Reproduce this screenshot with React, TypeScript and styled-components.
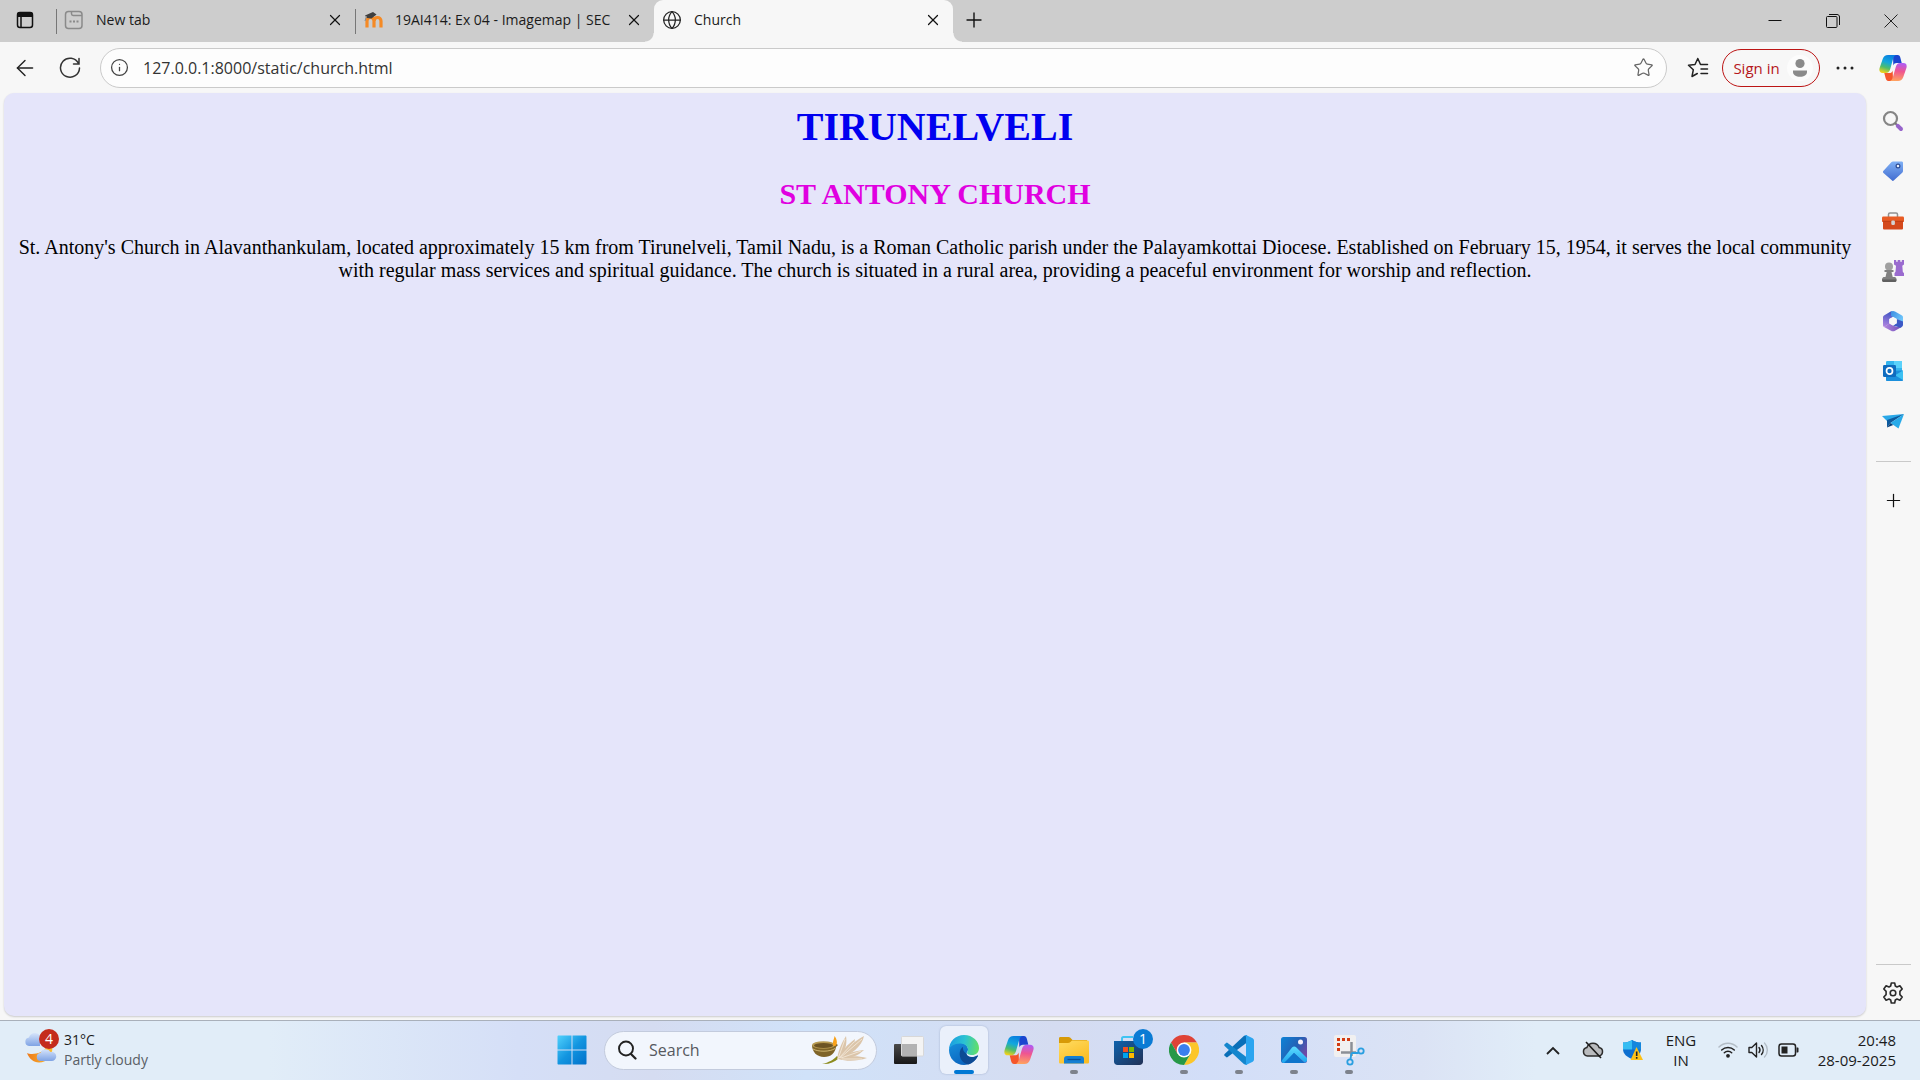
import React from "react";
import styled, { createGlobalStyle, css } from "styled-components";
import { ArrowLeft, Globe, Info, Plus, Star, X } from "lucide-react";

const UI_FONT = '"Open Sans", "Noto Sans", sans-serif';

const GlobalStyle = createGlobalStyle`
  * { box-sizing: border-box; }
  body { margin: 0; background: #f7f7f7; font-family: ${UI_FONT}; color: #1b1b1b; }
  button, input { font: inherit; color: inherit; }
`;

const Screen = styled.div`
  min-height: 100vh;
  display: flex;
  flex-direction: column;
`;

const plainButton = css`
  display: flex;
  align-items: center;
  justify-content: center;
  flex: none;
  padding: 0;
  border: 0;
  background: none;
`;

/* ---------- Tab strip ---------- */

const TabStrip = styled.header`
  height: 42px;
  display: flex;
  align-items: center;
  background: #cdcdcd;
`;

const TabActions = styled.button`
  ${plainButton}
  width: 56px;
  height: 42px;
  padding: 0 6px 2px 0;
`;

const TabShell = styled.div<{ $active?: boolean }>`
  position: relative;
  flex: 0 1 299px;
  min-width: 0;
  height: 42px;
  display: flex;
  align-items: center;
  gap: 12px;
  padding: 0 14px 3px 8px;
  font-size: 14px;
  background: ${(p) => (p.$active ? "#f7f7f7" : "transparent")};
  border-radius: 9px 9px 0 0;

  ${(p) =>
    p.$active
      ? css`
          &::before,
          &::after {
            content: "";
            position: absolute;
            bottom: 0;
            width: 9px;
            height: 9px;
          }
          &::before {
            right: 100%;
            background: radial-gradient(circle at 0 0, transparent 8px, #f7f7f7 9px);
          }
          &::after {
            left: 100%;
            background: radial-gradient(circle at 100% 0, transparent 8px, #f7f7f7 9px);
          }
        `
      : css`
          &::before {
            content: "";
            position: absolute;
            left: 0;
            top: 9px;
            width: 1px;
            height: 25px;
            background: #777;
          }
        `}
`;

const TabTitle = styled.span`
  flex: 1;
  min-width: 0;
  overflow: hidden;
  white-space: nowrap;
`;

const CloseTab = styled.button`
  ${plainButton}
  width: 12px;
  height: 20px;
`;

const NewTab = styled.button`
  ${plainButton}
  width: 42px;
  height: 42px;
  padding-bottom: 3px;
`;

const WindowControls = styled.div`
  margin-left: auto;
  display: flex;
`;

const WindowButton = styled.button`
  ${plainButton}
  width: 58px;
  height: 42px;
`;

/* ---------- Browser body ---------- */

const Browser = styled.div`
  flex: 1;
  display: grid;
  grid-template-columns: minmax(0, 1fr) 54px;
`;

const BrowserMain = styled.div`
  display: flex;
  flex-direction: column;
  padding: 0 0 4px 4px;
`;

const Toolbar = styled.div`
  height: 51px;
  display: flex;
  align-items: center;
  padding-right: 3px;
`;

const ToolButton = styled.button<{ $width: number }>`
  ${plainButton}
  width: ${(p) => p.$width}px;
  height: 40px;
`;

const AddressBar = styled.label`
  flex: 1;
  height: 40px;
  margin: 0 10px 0 6px;
  padding: 0 12px 0 9px;
  display: flex;
  align-items: center;
  gap: 14px;
  border: 1px solid #cacaca;
  border-radius: 20px;
  background: #fdfdfd;
`;

const AddressInput = styled.input`
  flex: 1;
  min-width: 0;
  padding: 0;
  border: 0;
  outline: 0;
  background: none;
  font-size: 16px;
  color: #333;
`;

const SignIn = styled.button`
  ${plainButton}
  width: 98px;
  height: 38px;
  gap: 7px;
  margin: 0 7px 0 3px;
  padding-left: 4px;
  border: 1px solid #bc1515;
  border-radius: 19px;
  color: #b5161b;
  font-size: 15px;
`;

const Avatar = styled.span`
  display: flex;
  border-radius: 50%;
  background: #fcfcfc;
`;

const Page = styled.main`
  flex: 1;
  padding: 11px 10px 10px;
  border-radius: 10px;
  background: #e5e5fa;
  box-shadow: 0 1px 2px rgba(0, 0, 0, 0.18);
  text-align: center;
  font-family: "Liberation Serif", "Times New Roman", serif;
  font-size: 20px;
  line-height: 23px;
  color: #000;
`;

const City = styled.h1`
  margin: 0 0 26px;
  font-size: 40px;
  line-height: 46px;
  color: #0000f0;
`;

const ChurchName = styled.h2`
  margin: 0 0 24px;
  font-size: 30px;
  line-height: 36px;
  color: #e000e0;
`;

const Description = styled.p`
  margin: 0;
`;

const Sidebar = styled.aside`
  display: flex;
  flex-direction: column;
  align-items: center;
`;

const SideButton = styled.button`
  ${plainButton}
  width: 54px;
  height: 50px;
`;

const CopilotButton = styled(SideButton)`
  margin: 1px 0 3px;
`;

const SideRule = styled.hr`
  width: 35px;
  height: 1px;
  flex: none;
  margin: 15px 0 13px;
  border: 0;
  background: #c9c9c9;
`;

const SideFoot = styled.div`
  margin-top: auto;
  padding-bottom: 2px;
  display: flex;
  flex-direction: column;
  align-items: center;

  hr {
    margin-bottom: 3px;
  }
`;

/* ---------- Taskbar ---------- */

const Taskbar = styled.footer`
  height: 60px;
  display: grid;
  grid-template-columns: 1fr auto 1fr;
  align-items: center;
  padding-bottom: 1px;
  border-top: 1px solid #a9b0ba;
  background: linear-gradient(
    90deg,
    #e1edf8 0%,
    #e1edf8 14%,
    #d5dff7 27%,
    #d5dcf1 34%,
    #d0e2f9 42%,
    #d5dcf1 55%,
    #d2def8 63%,
    #dbe3f5 74%,
    #e1edf8 80%,
    #e1edf8 100%
  );
`;

const Weather = styled.button`
  ${plainButton}
  justify-self: start;
  gap: 4px;
  padding-left: 24px;
  text-align: left;
  font-size: 14px;
  line-height: 20px;
`;

const WeatherText = styled.span`
  display: flex;
  flex-direction: column;
  color: #5a6066;

  strong {
    font-weight: 400;
    color: #1b1b1b;
  }
`;

const Apps = styled.nav`
  display: flex;
  align-items: center;
`;

const AppButton = styled.button<{ $state?: "open" | "active" }>`
  ${plainButton}
  position: relative;
  width: 48px;
  height: 48px;
  margin: 0 3px 0 4px;
  border-radius: 6px;
  background: ${(p) => (p.$state === "active" ? "#eaf0fb" : "none")};
  box-shadow: ${(p) => (p.$state === "active" ? "0 0 2px rgba(80, 100, 140, 0.4)" : "none")};

  &::after {
    content: "";
    display: ${(p) => (p.$state ? "block" : "none")};
    position: absolute;
    bottom: 0;
    width: ${(p) => (p.$state === "active" ? 20 : 8)}px;
    height: 4px;
    border-radius: 2px;
    background: ${(p) => (p.$state === "active" ? "#0078d4" : "#7d828c")};
  }
`;

const SearchBox = styled.label`
  width: 273px;
  height: 39px;
  margin: 0 4px 0 5px;
  padding: 0 8px 0 12px;
  display: flex;
  align-items: center;
  gap: 12px;
  border: 1px solid #c3cbdd;
  border-radius: 20px;
  background: #f2f6fd;
`;

const SearchInput = styled.input`
  flex: 1;
  min-width: 0;
  padding: 0;
  border: 0;
  outline: 0;
  background: none;
  font-size: 16px;

  &::placeholder {
    color: #56595f;
    opacity: 1;
  }
`;

const Tray = styled.div`
  justify-self: end;
  display: flex;
  align-items: center;
  padding-right: 24px;
`;

const TrayButton = styled.button<{ $width: number }>`
  ${plainButton}
  width: ${(p) => p.$width}px;
  height: 48px;
  font-size: 15px;
  line-height: 20px;
`;

const Clock = styled(TrayButton)`
  justify-content: flex-end;
  text-align: right;
`;

/* ---------- Drawings ---------- */

const CopilotIcon = ({ id, size }: { id: string; size: number }) => (
  <svg width={size} height={size} viewBox="0 0 28 27" aria-hidden="true">
    <defs>
      <linearGradient id={id + "a"} x1="0.6" y1="0" x2="0.3" y2="1">
        <stop offset="0" stopColor="#0a7fe0" />
        <stop offset="0.4" stopColor="#12a7dd" />
        <stop offset="0.7" stopColor="#4dbd6c" />
        <stop offset="1" stopColor="#f2d11b" />
      </linearGradient>
      <linearGradient id={id + "b"} x1="0.5" y1="0" x2="0.4" y2="1">
        <stop offset="0" stopColor="#b05cf5" />
        <stop offset="0.45" stopColor="#ef5590" />
        <stop offset="1" stopColor="#ffa35f" />
      </linearGradient>
    </defs>
    <path d="M14 .5h4.600c1.800 0 2.400 1.200 2.900 3.200L22.700 8.500h-5c-1.700 0-2.900.8-3.400 2.600z" fill="#1a45cf" />
    <path d="M14 26.500H9.400c-1.800 0-2.400-1.200-2.900-3.200L5.300 18.500h5c1.700 0 2.900-.8 3.400-2.600z" fill="#f5562b" />
    <path d="M9 .5h8.200c-1.800.4-2.600 2-3.300 4.500l-2.600 9.300c-.9 3-2 4.200-4.800 4.200H3.700C.8 18.500-.2 16.500.6 13.500L3.700 4.400C4.700 1.700 6.200.5 9 .5z" fill={`url(#${id}a)`} />
    <path d="M19 26.500h-8.200c1.800-.4 2.600-2 3.300-4.500l2.600-9.300c.9-3 2-4.200 4.800-4.200h2.800c2.900 0 3.900 2 3.100 5l-3.100 9.100c-1 2.700-2.500 3.900-5.300 3.900z" fill={`url(#${id}b)`} />
  </svg>
);

const TabActionsIcon = () => (
  <svg width="18" height="18" viewBox="0 0 18 18" fill="none" stroke="#111" strokeWidth="1.500" aria-hidden="true">
    <rect x="1.500" y="1.500" width="15" height="15" rx="2.500" />
    <path d="M1 3.500C1 2 2 1 3.500 1h11C16 1 17 2 17 3.500V6H1z" fill="#111" stroke="none" />
    <path d="M5 6v10.500" />
  </svg>
);

const PageIcon = () => (
  <svg width="20" height="20" viewBox="0 0 20 20" fill="none" stroke="#8a8a8a" strokeWidth="1.500" aria-hidden="true">
    <rect x="1.500" y="1.500" width="16.500" height="17" rx="3" />
    <path d="M7.500 1.500v2.300c0 1.200.6 1.700 1.700 1.700H18" />
    <path d="M5.500 11.500h2M9 11.500h2M12.500 11.500h2" strokeWidth="1.900" />
  </svg>
);

const MoodleIcon = () => (
  <svg width="20" height="18" viewBox="0 0 20 18" aria-hidden="true">
    <path d="M4 16.500V10C4 7.500 5.600 6.500 7.500 6.500S11 7.700 11 10v6.500M11.200 10C11.200 7.500 12.700 6.500 14.500 6.500S18 7.700 18 10v6.500" fill="none" stroke="#f58a25" strokeWidth="3.200" />
    <path d="M2 4.500L10 1l3.500 2.500-5 4L4 7z" fill="#3f3f3f" />
    <path d="M3.500 5L2 10" stroke="#888" strokeWidth="1" />
  </svg>
);

const ReloadIcon = () => (
  <svg width="22" height="22" viewBox="0 0 22 22" fill="none" stroke="#333" strokeWidth="1.500" strokeLinecap="round" aria-hidden="true">
    <path d="M19.500 6.500A9.500 9.500 0 1 0 20.500 11M20 1.500V7h-5.500" />
  </svg>
);

const FavoritesIcon = () => (
  <svg width="22" height="22" viewBox="0 0 22 22" fill="none" stroke="#222" strokeWidth="1.500" strokeLinecap="round" strokeLinejoin="round" aria-hidden="true">
    <path d="M20.500 7.500H13.500L10.800 1.500 8 7.500l-6.500.8 4.800 4.500L5 19.500l5.300-3M14 12h6.500M14 16.500h6.500" />
  </svg>
);

const PersonIcon = () => (
  <svg width="26" height="26" viewBox="0 0 26 26" fill="#8b8b8b" aria-hidden="true">
    <circle cx="13" cy="8.500" r="4.600" />
    <path d="M6 15.500h14v1.200c0 3.200-3 5-7 5s-7-1.800-7-5z" />
  </svg>
);

const DotsIcon = () => (
  <svg width="18" height="4" viewBox="0 0 18 4" fill="#222" aria-hidden="true">
    <circle cx="2" cy="2" r="1.500" />
    <circle cx="9" cy="2" r="1.500" />
    <circle cx="16" cy="2" r="1.500" />
  </svg>
);

const MagnifierIcon = () => (
  <svg width="22" height="22" viewBox="0 0 22 22" fill="none" aria-hidden="true">
    <circle cx="8.500" cy="8.500" r="6.500" stroke="#858585" strokeWidth="2.200" />
    <path d="M13 13l2.500 2.500" stroke="#777" strokeWidth="2" />
    <path d="M15.800 15.800l3.200 3.200" stroke="#9764cb" strokeWidth="4" strokeLinecap="round" />
  </svg>
);

const TagIcon = () => (
  <svg width="22" height="22" viewBox="0 0 22 22" aria-hidden="true">
    <defs>
      <linearGradient id="tag" x1="0" y1="0" x2="0" y2="1">
        <stop offset="0" stopColor="#7fb0f5" />
        <stop offset="1" stopColor="#426cd0" />
      </linearGradient>
    </defs>
    <path d="M11 1.500h8.500c1 0 1.500.5 1.500 1.500v8c0 .8-.3 1.200-.8 1.700L12 20.300c-.8.800-1.500.8-2.200 0L1.500 13c-.7-.7-.7-1.500 0-2.200l7.800-8.500c.5-.5 1-.8 1.700-.8z" fill="url(#tag)" />
    <circle cx="16" cy="6" r="1.900" fill="#e9f0fc" stroke="#2e4c93" strokeWidth="1.200" />
  </svg>
);

const ToolboxIcon = () => (
  <svg width="24" height="20" viewBox="0 0 24 20" aria-hidden="true">
    <path d="M7.500 6V3.500c0-1 .5-1.500 1.500-1.500h6c1 0 1.500.5 1.500 1.500V6" fill="none" stroke="#919191" strokeWidth="1.500" />
    <rect x="2" y="9" width="20" height="9.500" rx="1" fill="#d4491c" />
    <rect x="1" y="5.500" width="22" height="5.500" rx="1.200" fill="#e85c25" />
    <path d="M1.500 10.300h21" stroke="#b93a12" />
    <rect x="10.300" y="9.500" width="3.600" height="4.500" rx="1.200" fill="#d3d3d3" />
  </svg>
);

const ChessIcon = () => (
  <svg width="24" height="24" viewBox="0 0 24 24" aria-hidden="true">
    <path d="M13 1h2.200v1.800h1.500V1h2.600v1.800h1.500V1H23v4.500l-1.700 1.200.5 6 1.200 1.500V17h-9.500v-2.800l1-1.500.5-6L13 5.500z" fill="#9a6bcf" />
    <circle cx="8" cy="7.500" r="4" fill="#a0a0a0" />
    <path d="M3.500 11h9v2h-2l1.200 5H14c1 .5 1.500 1.500 1.500 2.500S15 23 14 23H2.500C1.500 23 1 21.500 1 20.500s.7-2 1.500-2.500h2l1.200-5H3.500z" fill="#818181" />
    <path d="M1 20.500h14.500c0 1.700-.5 2.500-1.500 2.500H2.500C1.500 23 1 22 1 20.500z" fill="#606060" />
  </svg>
);

const OfficeIcon = () => (
  <svg width="22" height="22" viewBox="0 0 22 22" aria-hidden="true">
    <defs>
      <linearGradient id="officeLeft" x1="0.500" y1="0" x2="0.300" y2="1">
        <stop offset="0" stopColor="#3f55c4" />
        <stop offset="1" stopColor="#b084e0" />
      </linearGradient>
      <linearGradient id="officeTop" x1="0" y1="0" x2="1" y2="0.600">
        <stop offset="0" stopColor="#3a8be0" />
        <stop offset="1" stopColor="#6fc6fb" />
      </linearGradient>
      <linearGradient id="officeBottom" x1="0" y1="0" x2="1" y2="0">
        <stop offset="0" stopColor="#b286e0" />
        <stop offset="1" stopColor="#6d4cb6" />
      </linearGradient>
    </defs>
    <path d="M9.500 1L2 5.500C1.300 6 1 6.500 1 7.300v7.900c0 .8.300 1.300 1 1.800l5.300-3.200V9L11 7z" fill="url(#officeLeft)" />
    <path d="M9 1.400c1.200-.7 2.800-.7 4 0l7 4.100c.7.400 1 1 1 1.800v5.200L14.700 9 9 5.800z" fill="url(#officeTop)" />
    <path d="M2 17l5.300-3.500L11 15.500l4 1.500 5-.2-7 4c-1.200.7-2.800.7-4 0z" fill="url(#officeBottom)" />
    <path d="M14.700 9L21 11.500v3.300c0 .9-.3 1.500-1 2l-1.500.9L11 15.500l3.700-2.200z" fill="#3c59c6" />
    <path d="M11 7l3.700 2v4.300L11 15.500l-3.700-2.200V9z" fill="#f7f7f7" />
  </svg>
);

const OutlookIcon = () => (
  <svg width="22" height="22" viewBox="0 0 22 22" aria-hidden="true">
    <rect x="4" y="1" width="16" height="14" rx="1.200" fill="#34b5ee" />
    <path d="M12 1h7c.6 0 1 .4 1 1v6h-8z" fill="#5ad2fb" />
    <path d="M4 11l17-.5V20c0 .6-.4 1-1 1H5c-.6 0-1-.4-1-1z" fill="#1b8fdc" />
    <path d="M21 10.500V20l-8-4.800z" fill="#3cc0f2" />
    <rect x="1" y="5" width="13" height="12" rx="1.200" fill="#0f6cbf" />
    <ellipse cx="7.500" cy="11" rx="3" ry="3.200" fill="none" stroke="#fff" strokeWidth="1.700" />
  </svg>
);

const PlaneIcon = () => (
  <svg width="24" height="18" viewBox="0 0 24 18" aria-hidden="true">
    <path d="M1 4L23 2 7 10z" fill="#2aa8e8" />
    <path d="M23 2L6 8v7.500L9.500 11z" fill="#0c5a9e" />
    <path d="M23 2L9.500 11l8 5.500z" fill="#27aae9" />
    <path d="M6 15.500L9.500 11l2.800 2z" fill="#0a3f78" />
  </svg>
);

const GearIcon = () => (
  <svg width="24" height="24" viewBox="0 0 24 24" fill="none" stroke="#2b2b2b" strokeWidth="1.600" strokeLinejoin="round" aria-hidden="true">
    <circle cx="12" cy="12" r="2.800" />
    <path d="M10.300 2h3.400l.6 3 1.700 1 2.900-1.200 2.300 3.200-2.300 2.400v3.200l2.300 2.400-2.300 3.200L16 18l-1.700 1-.6 3h-3.400l-.6-3L8 18l-2.900 1.200L2.800 16l2.300-2.400v-3.200L2.800 8l2.300-3.200L8 6l1.700-1z" />
  </svg>
);

const WeatherIcon = () => (
  <svg width="36" height="42" viewBox="0 0 36 42" aria-hidden="true">
    <defs>
      <linearGradient id="cloud" x1="0" y1="0" x2="0" y2="1">
        <stop offset="0" stopColor="#d6e4fb" />
        <stop offset="1" stopColor="#7fa3e4" />
      </linearGradient>
      <linearGradient id="moon" x1="0" y1="0" x2="1" y2="0">
        <stop offset="0" stopColor="#ed7a1c" />
        <stop offset="1" stopColor="#fdc02d" />
      </linearGradient>
    </defs>
    <path d="M5 17a4.300 4.300 0 0 1 0-8.500 6 6 0 0 1 11-1.500v10z" fill="url(#cloud)" />
    <path d="M3 24c5 2.500 17 0 19-6l6-1c2 9-5 16.500-13 16.500-5.500 0-10-4-12-9.500z" fill="url(#moon)" />
    <path d="M17 32a4 4 0 0 1-.5-8 5.500 5.500 0 0 1 10-1 4.600 4.600 0 1 1 .5 9z" fill="url(#cloud)" />
    <circle cx="25" cy="10" r="10" fill="#c42b1c" />
    <text x="25" y="15" textAnchor="middle" fontSize="14" fontFamily={UI_FONT} fill="#fff">4</text>
  </svg>
);

const WindowsIcon = () => (
  <svg width="30" height="30" viewBox="0 0 30 30" aria-hidden="true">
    <defs>
      <linearGradient id="win" gradientUnits="userSpaceOnUse" x1="0" y1="0" x2="30" y2="30">
        <stop offset="0" stopColor="#53d3fd" />
        <stop offset="0.500" stopColor="#1395e0" />
        <stop offset="1" stopColor="#006fc9" />
      </linearGradient>
    </defs>
    <path d="M1.500.5h13v14H.5v-13c0-.6.400-1 1-1zM15.500.5h13c.6 0 1 .4 1 1v13h-14zM.5 15.500h14v14h-13c-.6 0-1-.4-1-1zM15.500 15.500h14v13c0 .6-.4 1-1 1h-13z" fill="url(#win)" />
  </svg>
);

const SearchIcon = () => (
  <svg width="20" height="20" viewBox="0 0 20 20" fill="none" stroke="#222" strokeWidth="1.900" strokeLinecap="round" aria-hidden="true">
    <circle cx="9" cy="8.500" r="7" />
    <path d="M14 14l4.500 4.500" strokeWidth="2.200" />
  </svg>
);

const HarvestIcon = () => (
  <svg width="57" height="32" viewBox="0 0 57 32" aria-hidden="true">
    <path d="M11 30c7 .5 12-1.500 17-6l-2-2c-4 4-8 6.500-15 8z" fill="#8d8c1e" />
    <g fill="#dbc5aa">
      <path d="M26 26c1-9 4-16 9-24 1.500 8-1 18-9 24z" />
      <path d="M27 25c4-9 9-14 17-20-1 9-8 16-17 20z" />
      <path d="M27 25c6-10 14-16 26-23-2 10-12 19-26 23z" />
      <path d="M27 25c7-5 15-8 26-9-6 6-14 9-26 9z" />
      <path d="M27 25c9-3 18-4 29-1-9 3-19 4-29 1z" />
    </g>
    <path d="M27 25L34 5M28 24L43 8M29 24L51 5M30 24l20-7M31 25h20" stroke="#f3e8d8" strokeWidth="0.900" />
    <path d="M1 11c0 7 5 12 12 12s11-4 12-10l2-2-3-2z" fill="#7f6428" />
    <ellipse cx="12.500" cy="11" rx="11.500" ry="3.800" fill="#b79a52" />
    <ellipse cx="12.500" cy="11.500" rx="9.500" ry="2.600" fill="#6d5424" />
    <path d="M2 15c5 3 17 3 22-.5" fill="none" stroke="#cfb671" />
    <path d="M22.500 12c-1.500-4 .5-6 1-10 2.500 3 3.500 8 .8 10z" fill="#f9a21a" />
  </svg>
);

const TaskViewIcon = () => (
  <svg width="32" height="30" viewBox="0 0 32 30" aria-hidden="true">
    <defs>
      <linearGradient id="tv" x1="0" y1="0" x2="0" y2="1">
        <stop offset="0" stopColor="#4a4a4a" />
        <stop offset="1" stopColor="#181818" />
      </linearGradient>
    </defs>
    <rect x="1" y="9" width="23" height="20" rx="1" fill="url(#tv)" />
    <rect x="8.500" y="1.500" width="22" height="19.500" rx="1" fill="#f4f4f4" stroke="#d8d8d8" />
    <rect x="9" y="9" width="15" height="12" fill="#b3b3b3" />
  </svg>
);

const EdgeIcon = () => (
  <svg width="30" height="30" viewBox="0 0 30 30" aria-hidden="true">
    <defs>
      <linearGradient id="edgeTop" x1="0" y1="0.500" x2="1" y2="0.600">
        <stop offset="0" stopColor="#1b9de2" />
        <stop offset="0.500" stopColor="#2bc3d2" />
        <stop offset="1" stopColor="#63e065" />
      </linearGradient>
      <linearGradient id="edgeBody" x1="0" y1="0" x2="0.600" y2="1">
        <stop offset="0" stopColor="#1790dc" />
        <stop offset="1" stopColor="#0a62bd" />
      </linearGradient>
    </defs>
    <path d="M0 15C.5 9.500 5 7 10.500 7.500 16.500 8 19.500 11.500 19 15c-.3 2-1.700 2.500-1.500 4 .3 2.300 4 4 7.500 3 1.500-.4 2.600-1 3.300-1.400.5-.3.800.1.500.7C26 26.500 21 30 15 30 6.500 30 0 23.300 0 15z" fill="url(#edgeBody)" />
    <path d="M14 12c-5 2.500-5 15.500 5.500 17.500 4-1.300 7.400-4.400 9.300-8.200.3-.6-.1-1-.5-.7-5.500 3-10.800 1-10.800-1.800-2.500-1.500-4-4-3.500-6.800z" fill="#0d4a94" />
    <path d="M0 15C0 6.500 6.500 0 15 0c9 0 15 6.500 15 13 0 4.500-3 7-7 7-3.300 0-5.700-1-4.700-2.700C20.500 13.500 17.500 8.500 11 8.500 5 8.500.5 11.500 0 15z" fill="url(#edgeTop)" />
  </svg>
);

const FolderIcon = () => (
  <svg width="32" height="28" viewBox="0 0 32 28" aria-hidden="true">
    <defs>
      <linearGradient id="folder" x1="0" y1="0" x2="0.600" y2="1">
        <stop offset="0" stopColor="#ffdc62" />
        <stop offset="1" stopColor="#fbbd24" />
      </linearGradient>
    </defs>
    <path d="M1 2.500C1 1.500 1.500 1 2.500 1h8c.7 0 1.200.2 1.600.6L14.500 4H29v6H1z" fill="#d79a07" />
    <path d="M1 7h9c1 0 1.700-.3 2.400-1L14 4.500h15.500c1 0 1.500.5 1.500 1.500v20c0 1-.5 1.500-1.500 1.500h-27c-1 0-1.500-.5-1.500-1.500z" fill="url(#folder)" />
    <path d="M6 27.500V23c0-2 1-3 3-3h14c2 0 3 1 3 3v4.500z" fill="#157fd2" />
    <path d="M9.500 23.500h13" stroke="#0b4f96" strokeWidth="1.300" />
  </svg>
);

const StoreIcon = () => (
  <svg width="38" height="46" viewBox="-4 -1 38 46" aria-hidden="true">
    <defs>
      <linearGradient id="store" x1="0" y1="0" x2="1" y2="1">
        <stop offset="0" stopColor="#0f62ac" />
        <stop offset="1" stopColor="#213156" />
      </linearGradient>
    </defs>
    <path d="M8 14V10.500C8 9.500 8.500 9 9.500 9H19" fill="none" stroke="#3fc3f2" strokeWidth="2" />
    <path d="M0 13h29v20.500c0 2-1.500 3.500-3.500 3.500h-22C1.500 37 0 35.500 0 33.500z" fill="url(#store)" />
    <path d="M9 19h5v5h-5z" fill="#f25022" />
    <path d="M15 19h5v5h-5z" fill="#7fba00" />
    <path d="M9 25h5v5h-5z" fill="#00a4ef" />
    <path d="M15 25h5v5h-5z" fill="#ffb900" />
  </svg>
);

const Badge = styled.span`
  position: absolute;
  top: 3px;
  right: 0;
  width: 20px;
  height: 20px;
  border-radius: 50%;
  background: #0a7bd4;
  color: #fff;
  font-size: 14px;
  line-height: 20px;
  text-align: center;
`;

const ChromeIcon = () => (
  <svg width="30" height="30" viewBox="0 0 30 30" aria-hidden="true">
    <path d="M15 7.500h13A15 15 0 0 0 2 7.500l6.500 11.250z" fill="#df4337" />
    <path d="M28 7.500A15 15 0 0 1 15 30l6.500-11.250L15 7.500z" fill="#fcc629" />
    <path d="M15 30A15 15 0 0 1 2 7.500l6.500 11.250L15 22l6.500-3.250z" fill="#279847" />
    <circle cx="15" cy="15" r="7.400" fill="#fff" />
    <circle cx="15" cy="15" r="5.900" fill="#3b7fee" />
  </svg>
);

const CodeIcon = () => (
  <svg width="30" height="30" viewBox="0 0 30 30" aria-hidden="true">
    <path d="M22 8.200L3.700 22.100q-.8.600-1.600 0L.6 20.700q-.8-.8 0-1.600L19.800.9 23 0z" fill="#0a6fb8" />
    <path d="M22 21.800L3.700 7.900q-.8-.6-1.600 0L.6 9.300q-.8.800 0 1.600l19.200 18.200L23 30z" fill="#1486cd" />
    <path d="M19.800.9Q21-.3 22.500.3l6.200 3Q30 4 30 5.400v19.200q0 1.400-1.300 2.100l-6.200 3q-1.500.6-2.700-.6 2.200 1.200 2.200-1.200V2.100Q22-.3 19.800.9z" fill="#2ba5f0" />
  </svg>
);

const PhotosIcon = () => (
  <svg width="28" height="28" viewBox="0 0 28 28" aria-hidden="true">
    <defs>
      <linearGradient id="photo" x1="0" y1="0" x2="1" y2="0.600">
        <stop offset="0" stopColor="#0d83d6" />
        <stop offset="0.600" stopColor="#2460b5" />
        <stop offset="1" stopColor="#7349a6" />
      </linearGradient>
      <linearGradient id="hill" x1="0" y1="0" x2="0" y2="1">
        <stop offset="0" stopColor="#5fdcff" />
        <stop offset="1" stopColor="#1ba3ee" />
      </linearGradient>
    </defs>
    <rect x="1" y="1" width="26" height="26" rx="2.500" fill="url(#photo)" />
    <path d="M1.500 25L12 11.500q2.200-2.200 4.400 0L27 22v3l-2 2-11-10L5 27H3z" fill="url(#hill)" />
    <path d="M14 17l10.500 10H4z" fill="#0f75cc" />
    <circle cx="20.500" cy="6" r="2.500" fill="#f4f0fb" />
  </svg>
);

const SnipIcon = () => (
  <svg width="32" height="32" viewBox="0 0 32 32" fill="none" aria-hidden="true">
    <rect x="1" y="1" width="22" height="22" rx="2" fill="#f1f0f0" />
    <path d="M5.500 17V5.500H18" stroke="#d23b12" strokeWidth="3" strokeDasharray="3 2" />
    <path d="M18.500 8v14M8 18.500h15" stroke="#8c9096" strokeWidth="2.500" />
    <circle cx="28" cy="17" r="2.700" stroke="#2a9fe0" strokeWidth="1.800" />
    <circle cx="17" cy="28" r="2.700" stroke="#2a9fe0" strokeWidth="1.800" />
    <path d="M18.500 19l7 0M18.500 19l-1 6" stroke="#2a9fe0" strokeWidth="1.800" />
  </svg>
);

const CloudOffIcon = () => (
  <svg width="22" height="18" viewBox="0 0 22 18" aria-hidden="true">
    <path d="M5.500 15a4.300 4.300 0 0 1-.6-8.500 6.500 6.500 0 0 1 12.200 0A4.300 4.300 0 0 1 16.500 15z" fill="#b9bbbe" stroke="#2b2b2b" strokeWidth="1.500" />
    <path d="M4 1l15 16" stroke="#1b1b1b" strokeWidth="1.600" />
  </svg>
);

const ShieldIcon = () => (
  <svg width="22" height="22" viewBox="0 0 22 22" aria-hidden="true">
    <path d="M10 1c3 2 6 2.500 9 2.500V10c0 5-4 8-9 10C5 18 1 15 1 10V3.500C4 3.500 7 3 10 1z" fill="#0d6fd0" />
    <path d="M10 1v9.500H1v-7C4 3.500 7 3 10 1z" fill="#35bdf2" />
    <path d="M10 1c3 2 6 2.500 9 2.500v7h-9z" fill="#1487dd" />
    <path d="M14.500 8L21 21H8.500z" fill="#fdc116" />
    <path d="M14.700 12.500v4.500M14.700 18v1.700" stroke="#222" strokeWidth="1.600" />
  </svg>
);

const WifiIcon = () => (
  <svg width="20" height="18" viewBox="0 0 20 18" fill="none" strokeLinecap="round" aria-hidden="true">
    <path d="M1 6a12.700 12.700 0 0 1 18 0" stroke="#b3bdc6" strokeWidth="1.500" />
    <path d="M3.700 9a9 9 0 0 1 12.600 0M6.300 11.800a5.300 5.300 0 0 1 7.400 0" stroke="#222" strokeWidth="1.500" />
    <circle cx="10" cy="14.800" r="1.900" fill="#222" />
  </svg>
);

const SpeakerIcon = () => (
  <svg width="21" height="18" viewBox="0 0 21 18" fill="none" stroke="#222" strokeWidth="1.400" strokeLinecap="round" strokeLinejoin="round" aria-hidden="true">
    <path d="M1 6.500h2.800L8.500 2v14l-4.700-4.500H1z" />
    <path d="M11 6.500a4 4 0 0 1 0 5M13.500 4.500a7 7 0 0 1 0 9" />
    <path d="M16.500 2a10 10 0 0 1 0 14" stroke="#b3bdc6" />
  </svg>
);

const BatteryIcon = () => (
  <svg width="21" height="14" viewBox="0 0 21 14" aria-hidden="true">
    <rect x="1" y="1" width="16.500" height="12" rx="2.500" fill="none" stroke="#222" strokeWidth="1.500" />
    <rect x="3.500" y="3.500" width="6" height="7" fill="#222" />
    <path d="M18.500 4.500h1c.6 0 1 .4 1 1v3c0 .6-.4 1-1 1h-1z" fill="#222" />
  </svg>
);

/* ---------- Data ---------- */

const tabs = [
  { title: "New tab", icon: <PageIcon /> },
  { title: "19AI414: Ex 04 - Imagemap | SEC", icon: <MoodleIcon /> },
  { title: "Church", icon: <Globe size={20} strokeWidth={1.5} color="#222" />, active: true },
];

const sideApps = [
  { name: "Search", icon: <MagnifierIcon /> },
  { name: "Shopping", icon: <TagIcon /> },
  { name: "Tools", icon: <ToolboxIcon /> },
  { name: "Games", icon: <ChessIcon /> },
  { name: "Microsoft 365", icon: <OfficeIcon /> },
  { name: "Outlook", icon: <OutlookIcon /> },
  { name: "Drop", icon: <PlaneIcon /> },
];

const taskApps: { name: string; icon: React.ReactNode; state?: "open" | "active"; badge?: number }[] = [
  { name: "Task view", icon: <TaskViewIcon /> },
  { name: "Edge", icon: <EdgeIcon />, state: "active" },
  { name: "Copilot", icon: <CopilotIcon id="taskCopilot" size={30} /> },
  { name: "File Explorer", icon: <FolderIcon />, state: "open" },
  { name: "Store", icon: <StoreIcon />, badge: 1 },
  { name: "Chrome", icon: <ChromeIcon />, state: "open" },
  { name: "Visual Studio Code", icon: <CodeIcon />, state: "open" },
  { name: "Photos", icon: <PhotosIcon />, state: "open" },
  { name: "Snipping Tool", icon: <SnipIcon />, state: "open" },
];

export default function App() {
  return (
    <Screen>
      <GlobalStyle />
      <TabStrip>
        <TabActions aria-label="Tab actions">
          <TabActionsIcon />
        </TabActions>
        {tabs.map((tab) => (
          <TabShell key={tab.title} $active={tab.active}>
            {tab.icon}
            <TabTitle>{tab.title}</TabTitle>
            <CloseTab aria-label={`Close ${tab.title}`}>
              <X size={18} strokeWidth={1.6} color="#111" style={{ flex: "none" }} />
            </CloseTab>
          </TabShell>
        ))}
        <NewTab aria-label="New tab">
          <Plus size={24} strokeWidth={1.4} color="#111" />
        </NewTab>
        <WindowControls>
          <WindowButton aria-label="Minimize">
            <svg width="14" height="14" viewBox="0 0 14 14" stroke="#111" aria-hidden="true">
              <path d="M.5 6.500h13" />
            </svg>
          </WindowButton>
          <WindowButton aria-label="Restore">
            <svg width="14" height="14" viewBox="0 0 14 14" fill="none" stroke="#111" aria-hidden="true">
              <rect x="0.500" y="2.500" width="10.500" height="11" rx="1" />
              <path d="M3 .5h8c1.500 0 2.500 1 2.500 2.500v8" />
            </svg>
          </WindowButton>
          <WindowButton aria-label="Close">
            <svg width="14" height="14" viewBox="0 0 14 14" stroke="#222" aria-hidden="true">
              <path d="M.5.5l13 13M13.500.5l-13 13" />
            </svg>
          </WindowButton>
        </WindowControls>
      </TabStrip>

      <Browser>
        <BrowserMain>
          <Toolbar>
            <ToolButton $width={42} aria-label="Back">
              <ArrowLeft size={26} strokeWidth={1.3} color="#222" />
            </ToolButton>
            <ToolButton $width={48} aria-label="Refresh">
              <ReloadIcon />
            </ToolButton>
            <AddressBar>
              <Info size={19} strokeWidth={1.6} color="#444" />
              <AddressInput aria-label="Address" defaultValue="127.0.0.1:8000/static/church.html" />
              <Star size={21} strokeWidth={1.4} color="#666" />
            </AddressBar>
            <ToolButton $width={42} aria-label="Favorites">
              <FavoritesIcon />
            </ToolButton>
            <SignIn>
              Sign in
              <Avatar>
                <PersonIcon />
              </Avatar>
            </SignIn>
            <ToolButton $width={36} aria-label="Settings and more">
              <DotsIcon />
            </ToolButton>
          </Toolbar>
          <Page>
            <City>TIRUNELVELI</City>
            <ChurchName>ST ANTONY CHURCH</ChurchName>
            <Description>
              St. Antony's Church in Alavanthankulam, located approximately 15 km from Tirunelveli, Tamil Nadu, is a
              Roman Catholic parish under the Palayamkottai Diocese. Established on February 15, 1954, it serves the
              local community with regular mass services and spiritual guidance. The church is situated in a rural
              area, providing a peaceful environment for worship and reflection.
            </Description>
          </Page>
        </BrowserMain>
        <Sidebar>
          <CopilotButton aria-label="Copilot">
            <CopilotIcon id="sideCopilot" size={28} />
          </CopilotButton>
          {sideApps.map((app) => (
            <SideButton key={app.name} aria-label={app.name}>
              {app.icon}
            </SideButton>
          ))}
          <SideRule />
          <SideButton aria-label="Customize">
            <Plus size={21} strokeWidth={1.4} color="#111" />
          </SideButton>
          <SideFoot>
            <SideRule />
            <SideButton aria-label="Settings">
              <GearIcon />
            </SideButton>
          </SideFoot>
        </Sidebar>
      </Browser>

      <Taskbar>
        <Weather>
          <WeatherIcon />
          <WeatherText>
            <strong>31°C</strong>
            Partly cloudy
          </WeatherText>
        </Weather>
        <Apps>
          <AppButton aria-label="Start">
            <WindowsIcon />
          </AppButton>
          <SearchBox>
            <SearchIcon />
            <SearchInput aria-label="Search" placeholder="Search" />
            <HarvestIcon />
          </SearchBox>
          {taskApps.map((app) => (
            <AppButton key={app.name} aria-label={app.name} $state={app.state}>
              {app.icon}
              {app.badge && <Badge>{app.badge}</Badge>}
            </AppButton>
          ))}
        </Apps>
        <Tray>
          <TrayButton $width={40} aria-label="Show hidden icons">
            <svg width="14" height="9" viewBox="0 0 14 9" fill="none" stroke="#222" strokeWidth="1.800" aria-hidden="true">
              <path d="M1 8l6-6 6 6" />
            </svg>
          </TrayButton>
          <TrayButton $width={40} aria-label="OneDrive">
            <CloudOffIcon />
          </TrayButton>
          <TrayButton $width={40} aria-label="Security">
            <ShieldIcon />
          </TrayButton>
          <TrayButton $width={56} aria-label="Language">
            ENG
            <br />
            IN
          </TrayButton>
          <TrayButton $width={38} aria-label="Network">
            <WifiIcon />
          </TrayButton>
          <TrayButton $width={22} aria-label="Volume">
            <SpeakerIcon />
          </TrayButton>
          <TrayButton $width={38} aria-label="Battery">
            <BatteryIcon />
          </TrayButton>
          <Clock $width={89} aria-label="Clock">
            20:48
            <br />
            28-09-2025
          </Clock>
        </Tray>
      </Taskbar>
    </Screen>
  );
}
